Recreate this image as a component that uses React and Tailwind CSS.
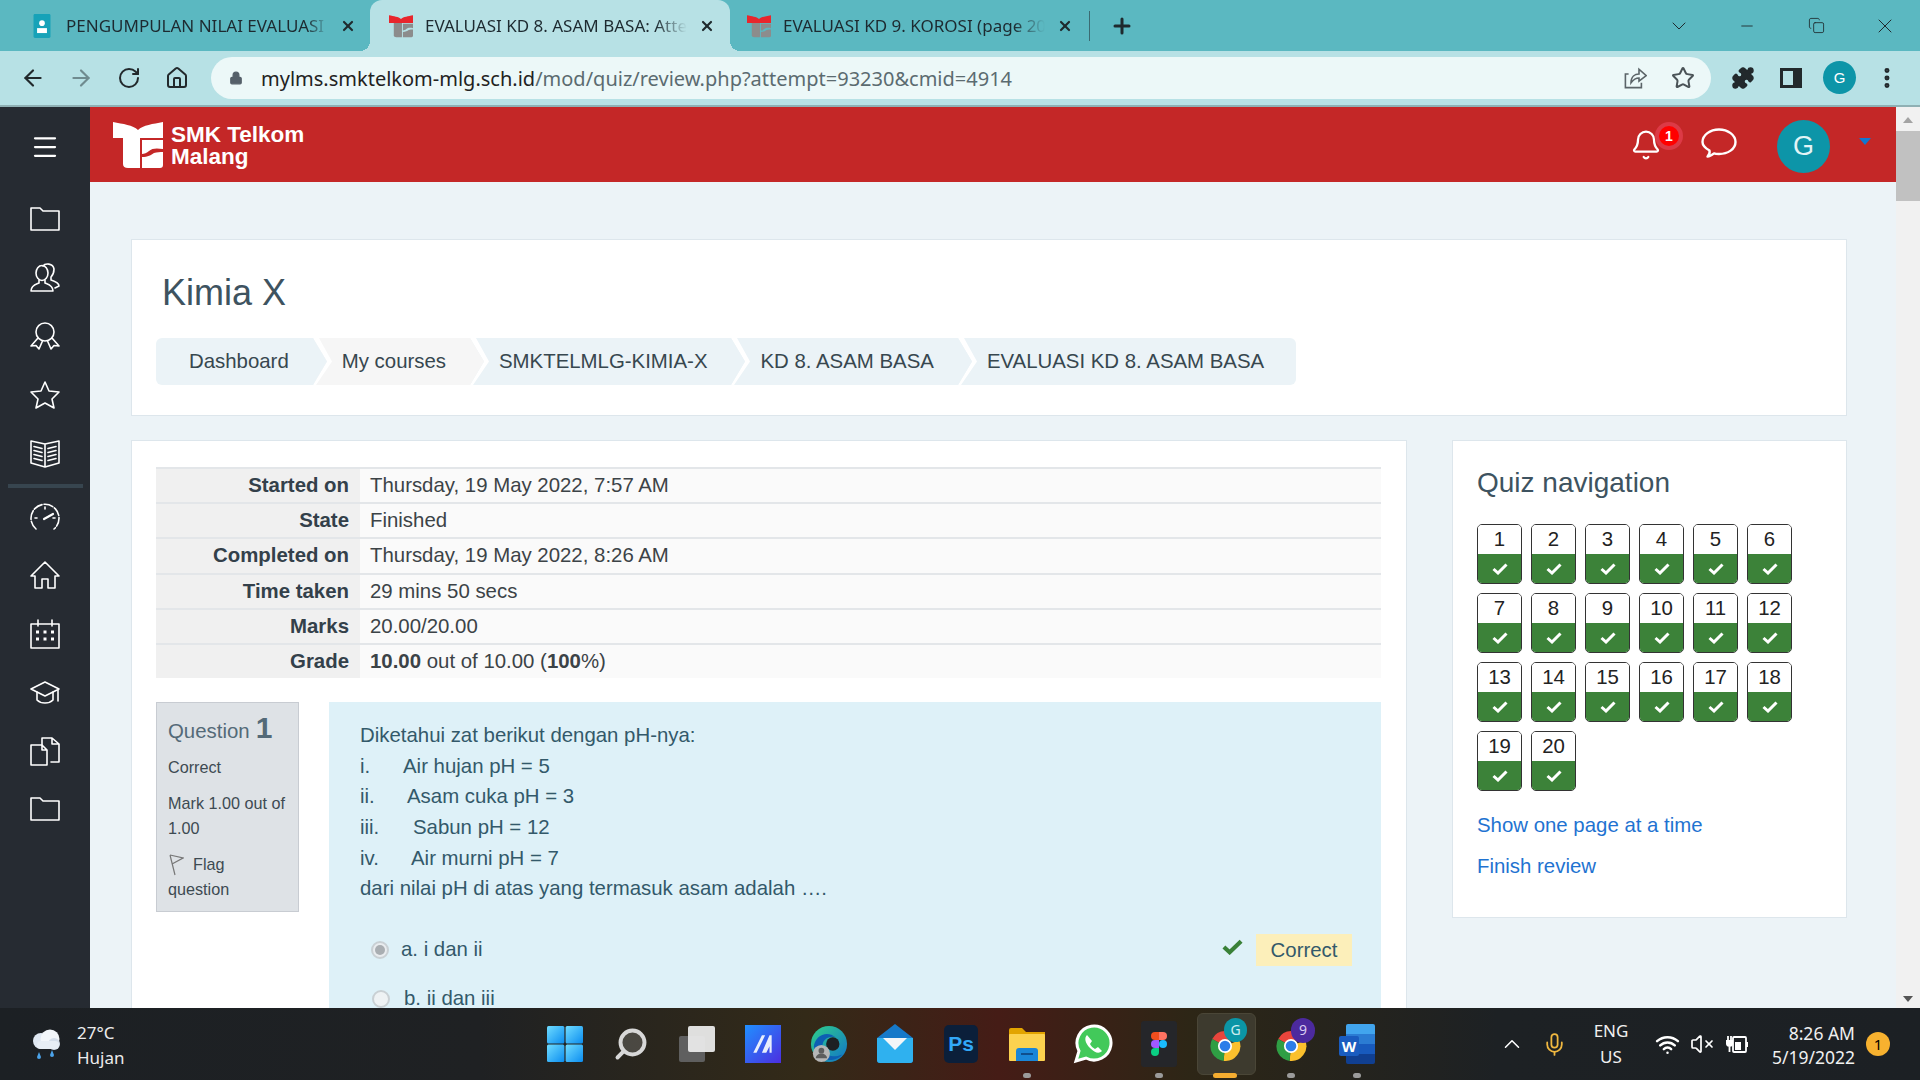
import React from "react";
import { Star as StarIcon, Home, Bell, ArrowLeft, ArrowRight, RotateCw, Lock, Puzzle, MoreVertical, X, Plus, ChevronDown, ChevronUp, Minus, Copy, Menu, Mic, Wifi, VolumeX, Search } from "lucide-react";

const sans = "font-['Liberation_Sans',Arial,sans-serif]";

function TsLogo({ top = "#fff", bottom = "#fff", className = "" }) {
  return (
    <svg viewBox="0 0 50 47" className={className}>
      <path fill={top} d="M0 1 C10 3 20 4 25 9 C30 4 40 3 50 1 V17 H0 Z" />
      <path fill={bottom} d="M10 17 H27 V47 H15 Q10 47 10 43 Z" />
      <path fill={bottom} d="M29 19 H50 V28 C44 27 39 27 36 30 C34 32 31 33 29 33 Z" />
      <path fill={bottom} d="M29 36 C35 36 38 34 41 32 C44 31 47 31 50 31 V44 Q50 47 47 47 H29 Z" />
    </svg>
  );
}

function Tab({ active, icon, title, widthClass }) {
  return (
    <div className={`relative flex items-center h-[51px] ${widthClass} ${active ? "bg-[#b7e1e5] rounded-t-[12px]" : ""}`}>
      {active && <div className="absolute bottom-0 left-[-10px] w-[10px] h-[10px] bg-[radial-gradient(circle_at_0_0,transparent_10px,#b7e1e5_10px)]" />}
      {active && <div className="absolute bottom-0 right-[-10px] w-[10px] h-[10px] bg-[radial-gradient(circle_at_100%_0,transparent_10px,#b7e1e5_10px)]" />}
      {icon}
      <span className="ml-[12px] w-[262px] overflow-hidden whitespace-nowrap text-[17px] text-[#1d2a30] font-['Noto_Sans',sans-serif] [mask-image:linear-gradient(90deg,#000_88%,transparent)]">{title}</span>
      <X size={16} strokeWidth={3.2} className="ml-[12px] text-[#1f2a2e]" />
    </div>
  );
}

const S = ({ children }) => (
  <svg viewBox="0 0 30 30" className="w-[30px] h-[30px]" fill="none" stroke="#fff" strokeWidth="1.6" strokeLinejoin="round" strokeLinecap="round">{children}</svg>
);

const FolderI = () => <S><path d="M1 4 V26 H29 V7 H13 L10 4 Z" /></S>;
const sideTop = [
  <FolderI />,
  <S><ellipse cx="12" cy="10" rx="6" ry="7.5" /><path d="M9 17 V20 C7 21 1 22 1 28 H23 C23 22 17 21 15 20 V17" /><path d="M13 3 C15 0 23 0 24 6 C24 10 23 12 21 14 V17 C24 18 29 20 29 23 L25 25" /></S>,
  <S><circle cx="15" cy="11" r="9" /><path d="M8 17 L1 25 L6 24.5 L9 28 L12.5 20" /><path d="M22 17 L29 25 L24 24.5 L21 28 L17.5 20" /></S>,
  <S><path d="M15 2 L19 11 L29 12 L22 19 L24 28 L15 23 L6 28 L8 19 L1 12 L11 11 Z" /></S>,
  <S><path d="M1 3 L15 6 L29 3 V25 L15 29 L1 25 Z M15 6 V29" /><path d="M4 8.5 L12 10.5 M4 12.5 L12 14.5 M4 16.5 L12 18.5 M4 20.5 L12 22.5 M26 8.5 L18 10.5 M26 12.5 L18 14.5 M26 16.5 L18 18.5 M26 20.5 L18 22.5" /></S>,
];
const sideBottom = [
  <S><path d="M6 27 A14 14 0 1 1 24 27" strokeDasharray="9 2" /><path d="M14 17 L23 12" strokeWidth="2.2" /><path d="M15 5 V7 M5 16 H7 M25 16 H23" /></S>,
  <S><path d="M15 2 L1 16 H5 V28 H12 V19 H18 V28 H25 V16 H29 Z" /></S>,
  <S><rect x="1" y="5" width="28" height="24" /><path d="M8 1 V7 M22 1 V7" /><path d="M6 13 H9 M13.5 13 H16.5 M21 13 H24 M6 20 H9 M13.5 20 H16.5 M21 20 H24" strokeWidth="3" strokeLinecap="butt" /></S>,
  <S><path d="M15 5 L1 12 L15 19 L29 12 Z" /><path d="M7 15 V23 C11 27 19 27 23 23 V15" /><path d="M28 13 V24" /></S>,
  <S><path d="M1 9 H12 L17 14 V29 H1 Z M12 9 V14 H17" /><path d="M12 9 V2 H22 L29 8 V26 H21 M22 2 V8 H29" /></S>,
  <FolderI />,
];

function Sidebar() {
  return (
    <aside className="w-[90px] shrink-0 bg-[#262b32] flex flex-col items-center pt-[25px]">
      <Menu size={30} strokeWidth={1.8} className="text-white" />
      <div className="mt-[42px] flex flex-col items-center gap-[28.5px]">
        {sideTop.map((I, i) => <React.Fragment key={i}>{I}</React.Fragment>)}
      </div>
      <div className="w-[75px] h-[4px] bg-[#37454f] mt-[16px] mb-[14px]" />
      <div className="flex flex-col items-center gap-[28.4px]">
        {sideBottom.map((I, i) => <React.Fragment key={i}>{I}</React.Fragment>)}
      </div>
    </aside>
  );
}

const crumbs = ["Dashboard", "My courses", "SMKTELMLG-KIMIA-X", "KD 8. ASAM BASA", "EVALUASI KD 8. ASAM BASA"];

function Breadcrumb() {
  return (
    <div className="mt-[24px] ml-[-6px] flex w-fit h-[47px] text-[20.4px] text-[#37474f]">
      {crumbs.map((c, i) => {
        const fill = i === 1 ? "#f6f6f6" : "#ebf3f7";
        return (
          <div key={c} className={`relative flex items-center ${i === 0 ? "pl-[33px] rounded-l-[6px]" : "pl-[28px]"} ${i === 4 ? "pr-[32px] rounded-r-[6px]" : "pr-[25px]"} ${i === 1 ? "bg-[#f6f6f6]" : "bg-[#ebf3f7]"}`}>
            <span>{c}</span>
            {i < crumbs.length - 1 && (
              <svg viewBox="0 0 22 47" preserveAspectRatio="none" className="absolute right-[-21px] top-0 w-[22px] h-[47px] z-10">
                <path d="M0 0 L14 23.5 L0 47 H3 L19 23.5 L6 0 Z" fill="#fff" />
                <path d="M0 0 L14 23.5 L0 47 Z" fill={fill} />
              </svg>
            )}
          </div>
        );
      })}
    </div>
  );
}

const rows = [
  ["Started on", "Thursday, 19 May 2022, 7:57 AM"],
  ["State", "Finished"],
  ["Completed on", "Thursday, 19 May 2022, 8:26 AM"],
  ["Time taken", "29 mins 50 secs"],
  ["Marks", "20.00/20.00"],
  ["Grade", <><b>10.00</b> out of 10.00 (<b>100</b>%)</>],
];

function SummaryTable() {
  return (
    <div className="text-[20.4px] text-[#3c4347]">
      {rows.map(([k, v]) => (
        <div key={k} className="flex h-[35.2px] border-t-2 border-[#e3e6e9] bg-[#fafafa] leading-[33px]">
          <div className="w-[204px] bg-[#f0f0f0] text-right pr-[11px] font-bold text-[#33404a]">{k}</div>
          <div className="pl-[10px]">{v}</div>
        </div>
      ))}
    </div>
  );
}

function QuestionInfo() {
  return (
    <div className="w-[143px] h-[210px] shrink-0 bg-[#dee2e6] border border-[#c8ccd2] px-[11px] pt-[7px] text-[16.2px] leading-[25px] text-[#3d4a52]">
      <div className="flex items-baseline h-[36px] text-[20.4px] text-[#546a78]">Question <b className="ml-[6px] text-[30px] leading-[36px]">1</b></div>
      <div className="mt-[9px]">Correct</div>
      <div className="mt-[11px]">Mark 1.00 out of 1.00</div>
      <div className="mt-[11px]">
        <svg viewBox="0 0 16 22" className="inline w-[16px] h-[22px] mr-[9px] align-[-6px]"><path d="M2 1 L7 21 M2 1 L15 4 L4 10" fill="none" stroke="#777" strokeWidth="1.2" /></svg>
        Flag question
      </div>
    </div>
  );
}

function Radio({ checked }) {
  return (
    <span className={`flex items-center justify-center w-[18px] h-[18px] rounded-full border-2 border-[#c9d0d4] ${checked ? "bg-[#e9ecef]" : "bg-[#eef2f4]"}`}>
      {checked && <span className="w-[10px] h-[10px] rounded-full bg-[#a9aeb2]" />}
    </span>
  );
}

function QuestionBody() {
  return (
    <div className="flex-1 bg-[#def1f8] pl-[31px] pr-[29px] pt-[18px] text-[20.4px] text-[#33596a]">
      <div className="leading-[30.6px]">
        <div>Diketahui zat berikut dengan pH-nya:</div>
        <div className="flex"><span className="w-[43px]">i.</span>Air hujan pH = 5</div>
        <div className="flex"><span className="w-[47px]">ii.</span>Asam cuka pH = 3</div>
        <div className="flex"><span className="w-[53px]">iii.</span>Sabun pH = 12</div>
        <div className="flex"><span className="w-[51px]">iv.</span>Air murni pH = 7</div>
        <div>dari nilai pH di atas yang termasuk asam adalah ….</div>
      </div>
      <div className="mt-[30px] flex items-center h-[32px] pl-[11px] gap-[12px]">
        <Radio checked /><span>a. i dan ii</span>
        <svg viewBox="0 0 22 16" className="ml-auto mr-[1px] mb-[5px] w-[21px] h-[16px]"><path d="M2 8 L8 13.5 L20 2" fill="none" stroke="#3a8138" strokeWidth="4.4" /></svg>
        <span className="bg-[#fcefba] h-[32px] w-[96px] text-center leading-[32px]">Correct</span>
      </div>
      <div className="mt-[18px] flex items-center h-[30px] pl-[12px] gap-[14px]">
        <Radio /><span>b. ii dan iii</span>
      </div>
    </div>
  );
}

function QuizNav() {
  return (
    <div className="w-[395px] h-[478px] shrink-0 bg-white border border-[#dde6ec] pl-[24px] pt-[22px]">
      <h3 className="text-[28px] leading-[40px] text-[#3e5360]">Quiz navigation</h3>
      <div className="mt-[21px] grid grid-cols-[repeat(6,45px)] gap-[9px]">
        {Array.from({ length: 20 }, (_, i) => (
          <div key={i} className="h-[60px] rounded-[5px] border border-[#333] overflow-hidden flex flex-col">
            <div className="h-[29px] bg-white text-center text-[20.4px] leading-[28px] text-[#222]">{i + 1}</div>
            <div className="flex-1 bg-[#3c8239] flex items-center justify-center">
              <svg viewBox="0 0 16 12" className="w-[16px] h-[12px]"><path d="M1.5 6 L6 10 L14.5 1.5" fill="none" stroke="#fff" strokeWidth="3" /></svg>
            </div>
          </div>
        ))}
      </div>
      <div className="mt-[19px] text-[20.4px] leading-[30px] text-[#1f73d1]">Show one page at a time</div>
      <div className="mt-[11px] text-[20.4px] leading-[30px] text-[#1f73d1]">Finish review</div>
    </div>
  );
}

function WinLogo() {
  return (
    <svg viewBox="0 0 36 36" className="w-[36px] h-[36px]">
      <defs><linearGradient id="w" x1="0" y1="0" x2="1" y2="1"><stop offset="0" stopColor="#6fdcff" /><stop offset="1" stopColor="#0b8df0" /></linearGradient></defs>
      <rect x="0" y="0" width="17.4" height="17.4" rx="1.5" fill="url(#w)" />
      <rect x="18.6" y="0" width="17.4" height="17.4" rx="1.5" fill="url(#w)" />
      <rect x="0" y="18.6" width="17.4" height="17.4" rx="1.5" fill="url(#w)" />
      <rect x="18.6" y="18.6" width="17.4" height="17.4" rx="1.5" fill="url(#w)" />
    </svg>
  );
}

function ChromeIcon({ size = 34 }) {
  return (
    <svg viewBox="0 0 48 48" width={size} height={size}>
      <path d="M24 24 L6 14 A21 21 0 0 1 44 16 L24 16 Z" fill="#e8453c" />
      <path d="M24 24 L44 16 A21 21 0 0 1 22 45 Z" fill="#fbc02d" />
      <path d="M24 24 L22 45 A21 21 0 0 1 6 14 Z" fill="#2f9e44" />
      <circle cx="24" cy="24" r="10" fill="#fff" />
      <circle cx="24" cy="24" r="7.5" fill="#2b7de9" />
    </svg>
  );
}

function Dot({ active }) {
  return <span className={`absolute bottom-[2px] left-1/2 -translate-x-1/2 h-[5px] rounded-full ${active ? "w-[24px] bg-[#f5ad30]" : "w-[8px] bg-[#9b9b9b]"}`} />;
}

const Cell = ({ children, className = "" }) => (
  <div className={`relative w-[66px] h-[72px] flex items-center justify-center ${className}`}>{children}</div>
);

function Taskbar() {
  return (
    <footer className="relative h-[72px] shrink-0 flex items-center bg-[linear-gradient(90deg,#1c2024_0%,#1f2123_25%,#332a18_42%,#451c16_52%,#2d2616_62%,#1d2124_78%,#1c2024_100%)] font-['Noto_Sans',sans-serif] text-white">
      <div className="w-[532px] shrink-0 flex items-center pl-[28px]">
        <svg viewBox="0 0 36 36" className="w-[36px] h-[36px]">
          <circle cx="13" cy="15" r="8" fill="#dfe8f2" /><circle cx="22" cy="13" r="9.5" fill="#f2f6fa" /><circle cx="26" cy="18" r="6" fill="#d4deea" /><rect x="9" y="15" width="22" height="8" rx="4" fill="#e7eef5" />
          <path d="M11 26 l2 5 a2 2 0 0 1 -4 0 Z M24 24 l2 5 a2 2 0 0 1 -4 0 Z" fill="#4ba3ea" />
        </svg>
        <div className="ml-[13px] text-[17px] leading-[25px] text-[#ececec] pt-[2px]"><div>27°C</div><div>Hujan</div></div>
      </div>
      <Cell><WinLogo /></Cell>
      <Cell><Search size={36} strokeWidth={2.6} fill="rgba(255,255,255,0.16)" className="text-[#d8d8d8] -scale-x-100" /></Cell>
      <Cell>
        <div className="relative w-[36px] h-[36px]">
          <div className="absolute left-[0px] top-[10px] w-[26px] h-[26px] bg-[#5f5f5f] rounded-[2px]" />
          <div className="absolute left-[9px] top-0 w-[27px] h-[26px] bg-[#e9e9e9] rounded-[2px] opacity-95" />
        </div>
      </Cell>
      <Cell>
        <div className="w-[36px] h-[38px] bg-[linear-gradient(135deg,#2090ff,#4c2ee0)] flex items-center justify-center">
          <svg viewBox="0 0 24 24" className="w-[26px] h-[26px]"><path d="M3 20 L11 4 H14 L6 20 Z M11 20 L18 4 H20 V20 H18 V14 L15 20 Z" fill="#e8eefc" /></svg>
        </div>
      </Cell>
      <Cell>
        <svg viewBox="0 0 40 42" className="w-[38px] h-[40px]">
          <defs><linearGradient id="e" x1="0" y1="0" x2="1" y2="1"><stop offset="0" stopColor="#2fd08a" /><stop offset="1" stopColor="#1173c9" /></linearGradient></defs>
          <circle cx="20" cy="21" r="19" fill="url(#e)" />
          <path d="M4 24 C5 12 18 6 27 14 C20 12 13 16 13 24 C13 32 22 37 34 32 C28 40 8 42 4 24Z" fill="#0d5fb3" />
          <circle cx="24" cy="21" r="7" fill="#1d2023" />
          <circle cx="12" cy="31" r="9" fill="#b6b6b6" /><circle cx="12" cy="28" r="3" fill="#5d5d5d" /><path d="M6 36 a6 5 0 0 1 12 0Z" fill="#5d5d5d" />
        </svg>
      </Cell>
      <Cell>
        <svg viewBox="0 0 36 40" className="w-[36px] h-[40px]">
          <path d="M0 14 L18 0 L36 14 V36 a3 3 0 0 1 -3 3 H3 a3 3 0 0 1 -3 -3Z" fill="#1679c9" />
          <path d="M0 14 H36 V36 a3 3 0 0 1 -3 3 H3 a3 3 0 0 1 -3 -3Z" fill="#2fb1ef" />
          <path d="M6 14 H30 L18 26Z" fill="#f3f6f8" />
        </svg>
      </Cell>
      <Cell>
        <div className="w-[34px] h-[38px] rounded-[5px] bg-[#0b1f3a] flex items-center justify-center text-[21px] font-bold text-[#32a8f8] font-['Liberation_Sans',sans-serif]">Ps</div>
      </Cell>
      <Cell>
        <svg viewBox="0 0 36 34" className="w-[36px] h-[34px]">
          <path d="M0 3 a2 2 0 0 1 2 -2 H13 L17 5 H36 V33 H0Z" fill="#e2a400" />
          <rect x="0" y="7" width="36" height="27" rx="1" fill="#fcd24f" />
          <path d="M7 24 a3 3 0 0 1 3 -3 H26 a3 3 0 0 1 3 3 V34 H7Z" fill="#1a86d8" />
          <rect x="12" y="26" width="12" height="2" fill="#0f4e8d" />
        </svg>
        <Dot />
      </Cell>
      <Cell>
        <svg viewBox="0 0 40 40" className="w-[40px] h-[40px]">
          <path d="M3 37 L6 27 A17 17 0 1 1 13 34 Z" fill="#42c95a" stroke="#fff" strokeWidth="3" />
          <path d="M14 11 c-3 3 -2 8 3 13 s9 6 12 3 l-4 -4 -3 2 c-2 -1 -4 -3 -5 -5 l2 -3 Z" fill="#fff" />
        </svg>
      </Cell>
      <Cell>
        <div className="w-[36px] h-[46px] rounded-[3px] bg-[#25262a] flex items-center justify-center">
          <svg viewBox="0 0 16 24" className="w-[16px] h-[24px]">
            <path d="M0 4 a4 4 0 0 1 4 -4 H8 V8 H4 a4 4 0 0 1 -4 -4Z" fill="#f24e1e" />
            <path d="M8 0 H12 a4 4 0 0 1 0 8 H8Z" fill="#ff7262" />
            <path d="M0 12 a4 4 0 0 1 4 -4 H8 V16 H4 a4 4 0 0 1 -4 -4Z" fill="#a259ff" />
            <circle cx="12" cy="12" r="4" fill="#1abcfe" />
            <path d="M0 20 a4 4 0 0 1 4 -4 H8 V20 a4 4 0 0 1 -8 0Z" fill="#0acf83" />
          </svg>
        </div>
        <Dot />
      </Cell>
      <Cell>
        <div className="absolute left-[5px] top-[5px] w-[59px] h-[62px] rounded-[6px] bg-[#3d3a2e] border border-[#4a4637]" />
        <div className="relative mt-[4px]"><ChromeIcon /></div>
        <div className="absolute left-[32px] top-[10px] w-[23px] h-[24px] rounded-full bg-[#0b95a6] text-center text-[14px] leading-[24px] text-[#cfeef0]">G</div>
        <Dot active />
      </Cell>
      <Cell>
        <div className="relative mt-[4px]"><ChromeIcon /></div>
        <div className="absolute left-[33px] top-[10px] w-[24px] h-[25px] rounded-full bg-[#4c2a9e] text-center text-[14px] leading-[24px] text-[#d9ccf2]">9</div>
        <Dot />
      </Cell>
      <Cell>
        <div className="relative w-[36px] h-[40px]">
          <div className="absolute left-[7px] top-0 w-[29px] h-[40px] rounded-[2px] bg-[linear-gradient(180deg,#41a5ee_25%,#2b7cd3_25%,#2b7cd3_50%,#185abd_50%,#185abd_75%,#103f91_75%)]" />
          <div className="absolute left-0 top-[12px] w-[20px] h-[20px] rounded-[2px] bg-[#1a5cbf] text-center text-[15px] font-bold leading-[20px]">W</div>
        </div>
        <Dot />
      </Cell>
      <div className="ml-[109px] flex items-center">
        <ChevronUp size={26} strokeWidth={1.4} className="text-white" />
        <Mic size={25} strokeWidth={1.7} className="ml-[17px] text-[#f0b840]" />
        <div className="ml-[24px] w-[40px] text-center text-[17px] leading-[26px] text-[#f0f0f0]"><div>ENG</div><div>US</div></div>
        <Wifi size={25} strokeWidth={2.4} className="ml-[24px]" />
        <VolumeX size={24} strokeWidth={1.7} className="ml-[10px]" />
        <svg viewBox="0 0 26 26" className="ml-[10px] w-[26px] h-[26px]" fill="none" stroke="#fff" strokeWidth="1.8">
          <rect x="9" y="6" width="13" height="15" rx="1" /><rect x="11" y="11" width="6" height="8" fill="#fff" stroke="none" /><path d="M23 11 V16" strokeWidth="2" />
          <path d="M2 9 H9 V13 C9 15 7 16 5.5 16 C4 16 2 15 2 13 Z" fill="#fff" stroke="none" /><path d="M4 5 V9 M7 5 V9 M5.5 16 V21" />
        </svg>
        <div className="ml-[13px] w-[92px] text-right text-[17.5px] leading-[24px] pt-[1px] text-[#f0f0f0]"><div>8:26 AM</div><div>5/19/2022</div></div>
        <div className="ml-[11px] w-[24px] h-[24px] rounded-full bg-[#f7b12f] text-black text-center text-[15px] leading-[24px]">1</div>
      </div>
    </footer>
  );
}

export default function App() {
  return (
    <div className={`w-[1920px] h-[1080px] flex flex-col overflow-hidden ${sans}`}>
      <div className="h-[51px] shrink-0 bg-[#5bb8c1] flex items-center pl-[30px]">
        <div className="flex items-center w-[340px]">
          <svg viewBox="0 0 24 34" className="w-[24px] h-[24px]"><rect width="24" height="34" rx="2" fill="#17a2b8" /><circle cx="12" cy="13" r="4" fill="#fff" /><rect x="5" y="20" width="14" height="7" fill="#fff" /></svg>
          <span className="ml-[12px] w-[262px] overflow-hidden whitespace-nowrap text-[17px] text-[#1d2a30] font-['Noto_Sans',sans-serif] [mask-image:linear-gradient(90deg,#000_92%,transparent)]">PENGUMPULAN NILAI EVALUASI</span>
          <X size={16} strokeWidth={3.2} className="ml-[12px] text-[#1f2a2e]" />
        </div>
        <Tab active widthClass="w-[360px] pl-[19px]" title="EVALUASI KD 8. ASAM BASA: Attempt" icon={<TsLogo top="#e8262c" bottom="#8c8c8c" className="w-[24px] h-[24px]" />} />
        <Tab widthClass="w-[359px] pl-[17px]" title="EVALUASI KD 9. KOROSI (page 20 of" icon={<TsLogo top="#e8262c" bottom="#8c8c8c" className="w-[24px] h-[24px]" />} />
        <div className="w-px h-[30px] bg-[#3b6b72]" />
        <Plus size={24} strokeWidth={3} className="ml-[20px] text-[#1f2a2e]" />
        <ChevronDown size={24} strokeWidth={1} className="ml-[533px] text-[#1f2a2e]" />
        <Minus size={18} strokeWidth={1.2} className="ml-[47px] text-[#1f2a2e]" />
        <Copy size={17} strokeWidth={1.2} className="ml-[52px] text-[#1f2a2e]" />
        <X size={24} strokeWidth={1} className="ml-[48px] text-[#1f2a2e]" />
      </div>

      <div className="h-[56px] shrink-0 bg-[#b7e1e5] border-b-[2px] border-[#8fb0b4] flex items-start pt-[6px] text-[#22292c]">
        <ArrowLeft size={26} strokeWidth={2} className="ml-[20px] mt-[8px]" />
        <ArrowRight size={26} strokeWidth={2} className="ml-[22px] mt-[8px] text-[#6f8b8f]" />
        <RotateCw size={24} strokeWidth={2} className="ml-[23px] mt-[9px]" />
        <Home size={24} strokeWidth={2} className="ml-[24px] mt-[9px]" />
        <div className="ml-[22px] w-[1500px] h-[42px] rounded-full bg-[#ecf8f8] flex items-center pl-[18px] pr-[16px]">
          <Lock size={14} fill="#55606a" strokeWidth={2} className="text-[#55606a]" />
          <span className="ml-[18px] mt-[1px] text-[20px] whitespace-nowrap font-['Noto_Sans',sans-serif] text-[#222]">mylms.smktelkom-mlg.sch.id<span className="text-[#5b6b70]">/mod/quiz/review.php?attempt=93230&amp;cmid=4914</span></span>
          <svg viewBox="0 0 30 30" className="ml-auto w-[24px] h-[24px]" fill="none" stroke="#5b6468" strokeWidth="2">
            <path d="M7 10 H3 V27 H23 V21" /><path d="M10 21 C10 13 15 10 20 10 V4 L29 12 L20 19 V15 C16 15 13 17 10 21 Z" />
          </svg>
          <StarIcon size={24} strokeWidth={2} className="ml-[24px] text-[#4a5357]" />
        </div>
        <Puzzle size={24} fill="#22292c" strokeWidth={1.5} className="ml-[20px] mt-[9px]" />
        <div className="ml-[25px] mt-[11px] w-[22px] h-[20px] border-[3px] border-[#22292c] border-r-[9px]" />
        <div className="ml-[21px] mt-[4px] w-[33px] h-[33px] rounded-full bg-[#0d95a8] text-center text-[15px] leading-[33px] text-white">G</div>
        <MoreVertical size={26} strokeWidth={2.6} className="ml-[18px] mt-[8px]" />
      </div>

      <div className="flex-1 flex min-h-0 overflow-hidden">
        <Sidebar />
        <div className="flex-1 min-w-0 flex flex-col bg-[#ecf3f7]">
          <header className="h-[75px] shrink-0 bg-[#c42727] flex items-center pl-[23px] text-white">
            <TsLogo className="w-[50px] h-[47px]" />
            <div className="ml-[8px] mt-[2px] text-[22.5px] font-bold leading-[22px]"><div>SMK Telkom</div><div>Malang</div></div>
            <div className="ml-auto relative w-[30px] h-[34px] mr-[41px] mt-[3px]">
              <Bell size={32} strokeWidth={1.7} />
              <div className="absolute left-[25px] top-[-7px] w-[28px] h-[28px] rounded-full bg-[#ff0000] border-[4px] border-[#dc3a46] text-center text-[14px] leading-[20px] font-bold">1</div>
            </div>
            <svg viewBox="0 0 36 30" className="w-[36px] h-[30px] mr-[40px] mt-[-4px]" fill="none" stroke="#fff" strokeWidth="2.4" strokeLinejoin="round">
              <path d="M18 1.5 C27 1.5 34.5 7 34.5 14 C34.5 21 27 26 18 26 C16 26 14 25.8 13 25.4 C11 27 9 28.5 6.5 28.5 C8 27 9 24.5 8.5 22.5 C4 20 1.5 17 1.5 14 C1.5 7 9 1.5 18 1.5 Z" />
            </svg>
            <div className="w-[53px] h-[53px] rounded-full bg-[#0d95a8] text-center text-[27px] leading-[53px] text-[#e3f4f6] mr-[29px] mt-[3px]">G</div>
            <div className="w-0 h-0 border-x-[6px] border-x-transparent border-t-[7px] border-t-[#1177d1] mr-[25px] mt-[-6px]" />
          </header>
          <main className="flex-1 min-h-0 overflow-hidden pl-[41px] pr-[49px] pt-[57px]">
            <section className="h-[177px] bg-white border border-[#dde6ec] pl-[30px] pt-[31px]">
              <h1 className="text-[36px] leading-[43px] text-[#3e5360]">Kimia X</h1>
              <Breadcrumb />
            </section>
            <div className="mt-[24px] flex items-start gap-[45px]">
              <section className="flex-1 h-[700px] bg-white border border-[#dde6ec] pl-[24px] pr-[25px] pt-[26px]">
                <SummaryTable />
                <div className="mt-[24px] flex gap-[30px]">
                  <QuestionInfo />
                  <QuestionBody />
                </div>
              </section>
              <QuizNav />
            </div>
          </main>
        </div>
        <div className="w-[24px] shrink-0 bg-[#f1f1f1] flex flex-col items-center">
          <div className="w-0 h-0 mt-[10px] border-x-[5px] border-x-transparent border-b-[6px] border-b-[#a3a3a3]" />
          <div className="w-full h-[70px] mt-[8px] bg-[#c1c1c1]" />
          <div className="mt-auto mb-[6px] w-0 h-0 border-x-[5px] border-x-transparent border-t-[6px] border-t-[#555]" />
        </div>
      </div>
      <Taskbar />
    </div>
  );
}
